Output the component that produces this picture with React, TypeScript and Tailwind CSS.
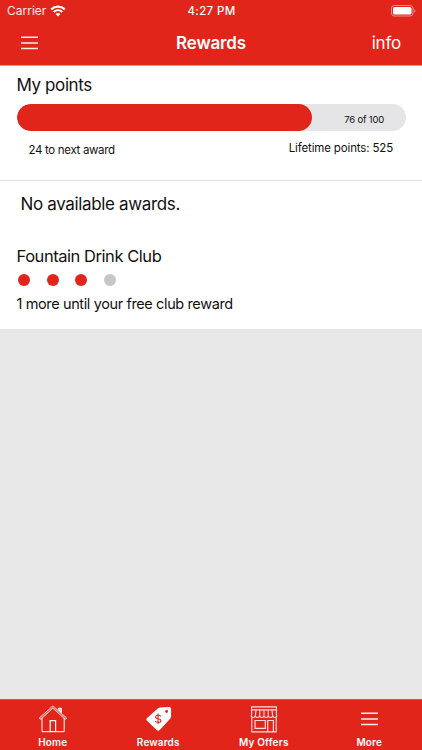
import React from 'react';

interface Tab {
  label: string;
  icon: React.ReactNode;
  labelClass: string;
}

const WifiIcon = () => (
  <svg className="w-4 h-3" viewBox="0 0 16 12" fill="none">
    <path d="M1.2 4.4C5.1.7 10.9.7 14.8 4.4" stroke="white" strokeWidth="2.2" />
    <path d="M3.7 6.9C6.2 4.6 9.8 4.6 12.3 6.9" stroke="white" strokeWidth="2" />
    <path d="M8 11.4 5.6 9C7 7.8 9 7.8 10.4 9Z" fill="white" />
  </svg>
);

const BatteryIcon = () => (
  <svg className="w-[25px] h-3" viewBox="0 0 25 12" fill="none">
    <rect x=".5" y=".5" width="21.5" height="10.5" rx="2.8" stroke="white" strokeOpacity=".5" />
    <rect x="2" y="2" width="18.5" height="7.5" rx="1.5" fill="white" />
    <path d="M23.3 4v3.6c1.4-.5 1.4-3.1 0-3.6Z" fill="white" fillOpacity=".5" />
  </svg>
);

const MenuIcon = () => (
  <svg className="w-[17px] h-[14px]" viewBox="0 0 17 14" stroke="white" strokeWidth="1.5" strokeOpacity=".9">
    <path d="M0 1.3h17M0 6.9h17M0 12.4h17" />
  </svg>
);

const HomeIcon = () => (
  <svg className="w-[30px] h-7" viewBox="0 0 30 28" fill="none" stroke="white" strokeWidth="1">
    <path d="M4 13.2V26.7H26.2V13.2" />
    <path d="M1.2 13 14.9.9 28.7 13 27.3 14.5 14.9 3.3 2.7 14.5Z" fill="white" fillOpacity=".35" strokeOpacity=".7" />
    <path d="M20.5 4.6V3.2H23.4V7.6Z" fill="white" fillOpacity=".7" />
    <path d="M12.2 26.5V15.7H17.6V26.5Z" strokeWidth="1.2" />
  </svg>
);

const TagIcon = () => (
  <svg className="ml-[2px] w-[26px] h-6" viewBox="0 0 26 24" fill="none">
    <path
      d="M14.3.4 23.1 0C24.3 0 25.1.8 25.1 2V9.2C25.1 10.2 24.8 10.9 24.1 11.7L13.8 23C12.7 24.1 11.8 24.1 10.7 23L1 13.8C0 12.8 0 11.8 1.1 10.9L12 1.3C12.7.7 13.4.4 14.3.4Z"
      fill="white"
    />
    <circle cx="20.6" cy="4.5" r="1.4" fill="#e1251b" />
    <path
      d="M14.8 9.4C14 7.9 9.8 7.8 9.6 10 9.5 12.6 14.9 11 14.9 13.7 14.8 16 10.2 15.9 9.2 13.9M12.1 6.6V17.1"
      stroke="#e1251b"
      strokeWidth="1.1"
    />
  </svg>
);

const StoreIcon = () => (
  <svg className="w-7 h-[27px]" viewBox="0 0 28 27" fill="none" stroke="white" strokeWidth="1.1" strokeOpacity=".85">
    <path d="M1.6.9H26.4V3.9H1.6ZM1.6 3.9V9.5M26.4 3.9V9.5M1.8 11.5V25.9H26.2V11.5" />
    <path d="M1.1 9.6a2.15 1.9 0 0 0 4.3 0 2.15 1.9 0 0 0 4.3 0 2.15 1.9 0 0 0 4.3 0 2.15 1.9 0 0 0 4.3 0 2.15 1.9 0 0 0 4.3 0 2.15 1.9 0 0 0 4.3 0" />
    <path d="M6 4 5.4 9.6M9.9 4 9.7 9.6M14 4V9.6M18.1 4 18.3 9.6M22 4 22.6 9.6" />
    <path d="M5 14.5H15.3V22.4H5ZM17.7 25.9V14.5H23.4V25.9" strokeWidth="1.2" />
  </svg>
);

const tabs: Tab[] = [
  { label: 'Home', icon: <HomeIcon />, labelClass: 'tracking-[0.1px]' },
  { label: 'Rewards', icon: <TagIcon />, labelClass: 'tracking-[0.15px]' },
  { label: 'My Offers', icon: <StoreIcon />, labelClass: 'tracking-[0.2px]' },
  { label: 'More', icon: <MenuIcon />, labelClass: 'tracking-[0.1px]' },
];

const clubStamps = [true, true, true, false];
const points = 76;

const App: React.FC = () => {
  return (
    <div className="flex h-[750px] w-[422px] flex-col overflow-hidden bg-[#e7e7e7] font-['Inter',sans-serif] text-[#111]">
      <header className="h-[66px] border-b border-[#ff8f88] bg-[#e1251b] text-white">
        <div className="grid h-[22px] grid-cols-3 items-center pl-[7px] pr-[6px] text-[12px]">
          <div className="flex items-center gap-[4px]">
            <span className="text-white/90">Carrier</span>
            <WifiIcon />
          </div>
          <span className="pt-px text-center text-[11.5px] font-medium tracking-[0.35px]">4:27 PM</span>
          <div className="flex justify-end">
            <BatteryIcon />
          </div>
        </div>
        <div className="grid h-[42px] grid-cols-3 items-center pl-[21px] pr-[21px]">
          <button type="button" aria-label="Menu">
            <MenuIcon />
          </button>
          <h1 className="pt-[2px] text-center text-[17px] font-semibold tracking-[-0.15px]">Rewards</h1>
          <button type="button" className="pt-[2px] text-right text-[17px] tracking-[-0.2px]">info</button>
        </div>
      </header>

      <section className="h-[115px] border-b border-[#e4e4e4] bg-white pl-[16.5px] pr-[17px] pt-[9px]">
        <h2 className="h-[29px] text-[17px] leading-[21px] tracking-[-0.4px]">My points</h2>
        <div className="relative h-[27px] w-[389px] overflow-hidden rounded-full bg-[#e5e5e7]">
          <div className="h-full rounded-full bg-[#e1251b]" style={{ width: `${points}%` }} />
          <span className="absolute right-[21.5px] top-[8px] text-[9.5px] leading-[15px] tracking-[-0.2px]">
            {points} of 100
          </span>
        </div>
        <div className="flex justify-between pl-3 pr-[12px]">
          <span className="pt-[11px] text-[11.5px] leading-[17px] tracking-[-0.33px]">24 to next award</span>
          <span className="pt-[9px] text-[11.5px] leading-[17px] tracking-[-0.15px]">Lifetime points: 525</span>
        </div>
      </section>

      <section className="h-[148px] bg-white pl-[16.5px] pr-[17px] pt-[12px]">
        <p className="pl-1 text-[17px] leading-[22px] tracking-[-0.35px]">No available awards.</p>
        <h2 className="mt-[30px] text-[16.5px] leading-[22px] tracking-[-0.45px]">Fountain Drink Club</h2>
        <div className="mt-[7px] flex gap-[16.5px] pl-[1.5px]">
          {clubStamps.map((filled, i) => (
            <span
              key={i}
              className={`h-[12px] w-[12px] rounded-full ${filled ? 'bg-[#e1251b]' : 'bg-[#c6c6c8]'}`}
            />
          ))}
        </div>
        <p className="mt-[7px] text-[14.5px] leading-[22px] tracking-[-0.38px]">1 more until your free club reward</p>
      </section>

      <nav className="mt-auto grid h-[51px] grid-cols-4 border-t border-[#cf5a53] bg-[#e1251b] text-white">
        {tabs.map((tab) => (
          <button key={tab.label} type="button" className="flex flex-col items-center">
            <span className="flex h-[36px] items-center pt-[2px]">{tab.icon}</span>
            <span className={`text-[10px] font-semibold leading-[12px] ${tab.labelClass}`}>{tab.label}</span>
          </button>
        ))}
      </nav>
    </div>
  );
};

export default App;
